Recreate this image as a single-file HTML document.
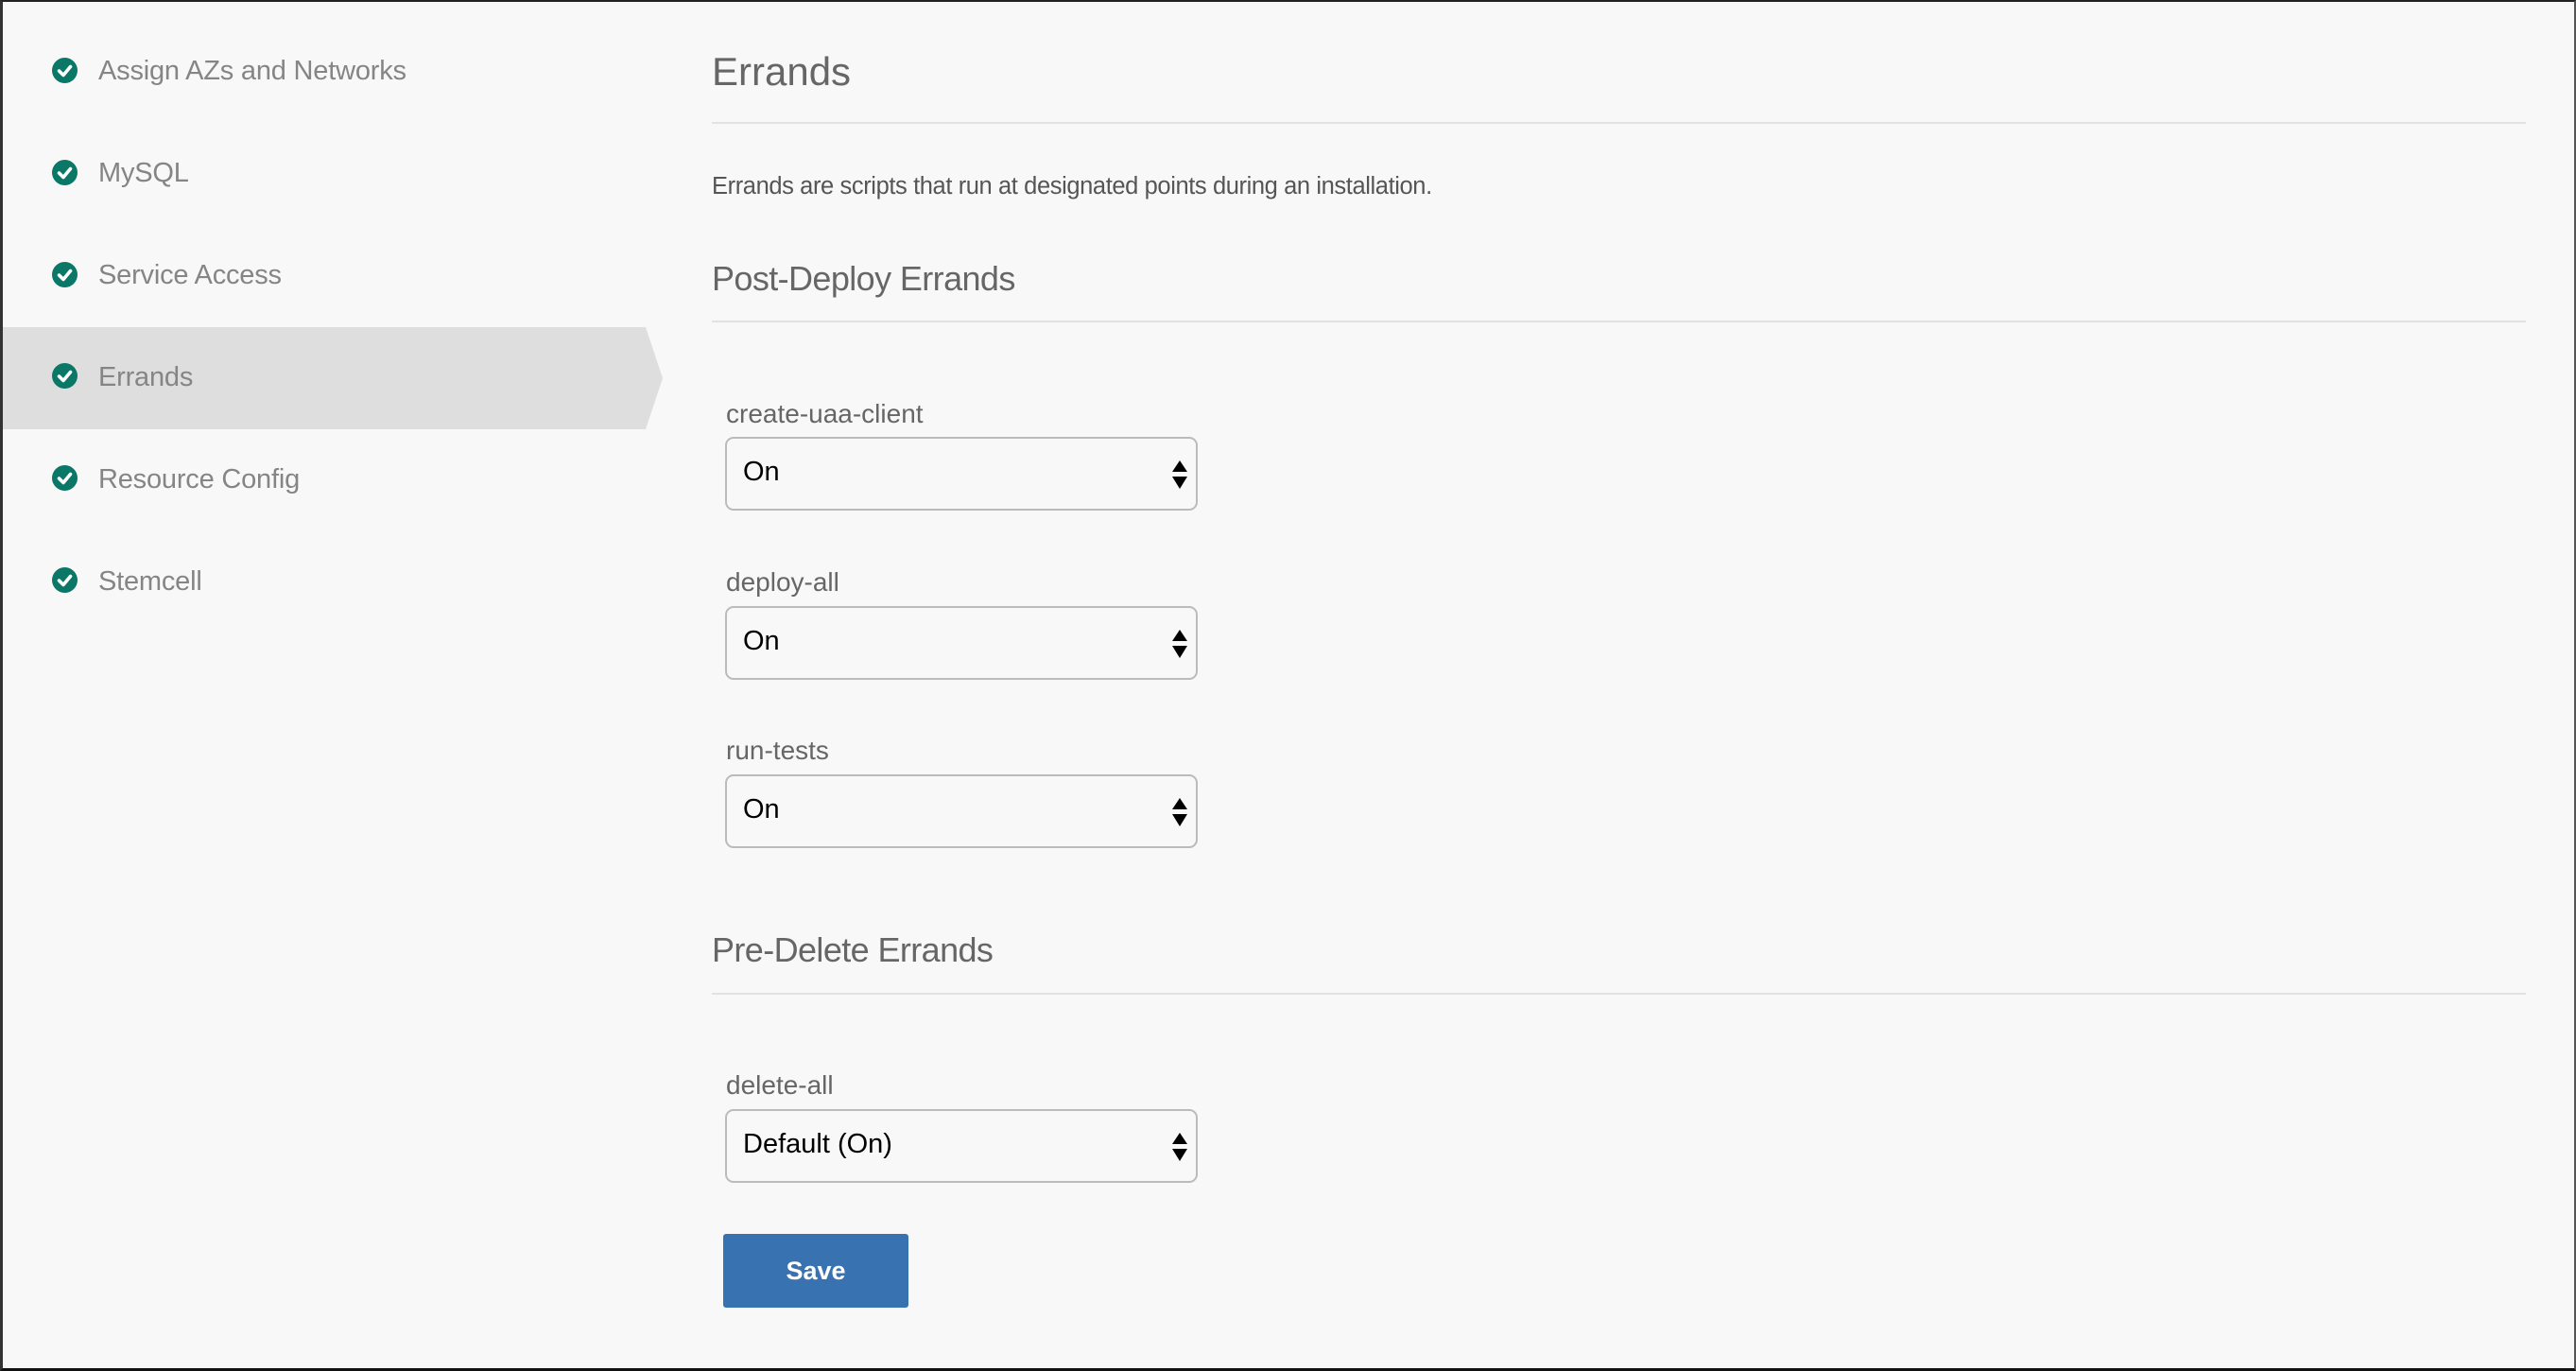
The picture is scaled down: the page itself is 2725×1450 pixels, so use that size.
<!DOCTYPE html>
<html><head><meta charset="utf-8"><style>
*{margin:0;padding:0;box-sizing:border-box}
html,body{width:2725px;height:1450px;overflow:hidden;background:#f8f8f8;font-family:"Liberation Sans",sans-serif}
.frame{position:absolute;left:0;top:0;width:2725px;height:1450px;border-top:2px solid #222;border-left:3px solid #333;border-bottom:3px solid #111;border-right:2px solid #555}
.ic{position:absolute;left:55px;width:27px;height:27px;border-radius:50%;background:#0a7767}
.ic svg{position:absolute;left:0;top:0}
.st{position:absolute;left:104px;font-size:29px;color:#858585;white-space:nowrap;letter-spacing:-0.2px}
.active{position:absolute;left:3px;top:346px;width:698px;height:108px;background:#dedede;clip-path:polygon(0 0,680px 0,698px 54px,680px 108px,0 108px)}
.h{position:absolute;left:753px;color:#5f5f5f;white-space:nowrap}
.hr{position:absolute;left:753px;width:1919px;height:2px;background:#e2e2e2}
.lab{position:absolute;left:768px;font-size:28px;color:#666;white-space:nowrap}
.sel{position:absolute;left:767px;width:500px;height:78px;border:2px solid #bbb;border-radius:9px;background:#f8f8f8}
.sel span{position:absolute;left:17px;top:19px;font-size:29px;color:#000}
.sel svg{position:absolute;right:9px;top:23px}
.btn{position:absolute;left:765px;top:1305px;width:196px;height:78px;background:#3872b0;border-radius:3px;color:#fff;font-size:27px;font-weight:bold;text-align:center;line-height:78px}
</style></head><body>
<div class="frame"></div>
<div class="active"></div>

<div class="ic" style="top:61px"><svg width="27" height="27"><path d="M7.5 14 L12 18.5 L19.5 9.5" stroke="#fff" stroke-width="3.6" fill="none" stroke-linecap="round" stroke-linejoin="round"/></svg></div>
<div class="st" style="top:59px">Assign AZs and Networks</div>
<div class="ic" style="top:169px"><svg width="27" height="27"><path d="M7.5 14 L12 18.5 L19.5 9.5" stroke="#fff" stroke-width="3.6" fill="none" stroke-linecap="round" stroke-linejoin="round"/></svg></div>
<div class="st" style="top:167px">MySQL</div>
<div class="ic" style="top:277px"><svg width="27" height="27"><path d="M7.5 14 L12 18.5 L19.5 9.5" stroke="#fff" stroke-width="3.6" fill="none" stroke-linecap="round" stroke-linejoin="round"/></svg></div>
<div class="st" style="top:275px">Service Access</div>
<div class="ic" style="top:384px"><svg width="27" height="27"><path d="M7.5 14 L12 18.5 L19.5 9.5" stroke="#fff" stroke-width="3.6" fill="none" stroke-linecap="round" stroke-linejoin="round"/></svg></div>
<div class="st" style="top:383px">Errands</div>
<div class="ic" style="top:492px"><svg width="27" height="27"><path d="M7.5 14 L12 18.5 L19.5 9.5" stroke="#fff" stroke-width="3.6" fill="none" stroke-linecap="round" stroke-linejoin="round"/></svg></div>
<div class="st" style="top:491px">Resource Config</div>
<div class="ic" style="top:600px"><svg width="27" height="27"><path d="M7.5 14 L12 18.5 L19.5 9.5" stroke="#fff" stroke-width="3.6" fill="none" stroke-linecap="round" stroke-linejoin="round"/></svg></div>
<div class="st" style="top:599px">Stemcell</div>

<div class="h" style="top:52px;font-size:42px;color:#666">Errands</div>
<div class="hr" style="top:129px"></div>
<div class="h" style="top:183px;font-size:25.5px;color:#555;letter-spacing:-0.4px">Errands are scripts that run at designated points during an installation.</div>
<div class="h" style="top:274px;font-size:36px;letter-spacing:-0.6px;color:#666">Post-Deploy Errands</div>
<div class="hr" style="top:339px"></div>

<div class="lab" style="top:422px">create-uaa-client</div>
<div class="sel" style="top:462px"><span>On</span><svg width="16" height="30"><path d="M8 0 L16 12 L0 12Z M0 17 L16 17 L8 30Z" fill="#000"/></svg></div>
<div class="lab" style="top:600px">deploy-all</div>
<div class="sel" style="top:641px"><span>On</span><svg width="16" height="30"><path d="M8 0 L16 12 L0 12Z M0 17 L16 17 L8 30Z" fill="#000"/></svg></div>
<div class="lab" style="top:778px">run-tests</div>
<div class="sel" style="top:819px"><span>On</span><svg width="16" height="30"><path d="M8 0 L16 12 L0 12Z M0 17 L16 17 L8 30Z" fill="#000"/></svg></div>

<div class="h" style="top:984px;font-size:36px;letter-spacing:-0.6px;color:#666">Pre-Delete Errands</div>
<div class="hr" style="top:1050px"></div>

<div class="lab" style="top:1132px">delete-all</div>
<div class="sel" style="top:1173px"><span>Default (On)</span><svg width="16" height="30"><path d="M8 0 L16 12 L0 12Z M0 17 L16 17 L8 30Z" fill="#000"/></svg></div>

<div class="btn">Save</div>
</body></html>
